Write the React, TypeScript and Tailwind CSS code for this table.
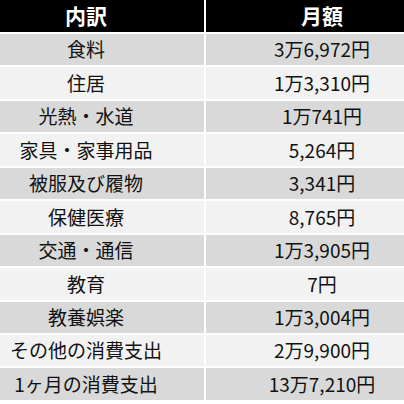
import React from 'react';

const rows: [string, string][] = [
  ['食料', '3万6,972円'],
  ['住居', '1万3,310円'],
  ['光熱・水道', '1万741円'],
  ['家具・家事用品', '5,264円'],
  ['被服及び履物', '3,341円'],
  ['保健医療', '8,765円'],
  ['交通・通信', '1万3,905円'],
  ['教育', '7円'],
  ['教養娯楽', '1万3,004円'],
  ['その他の消費支出', '2万9,900円'],
  ['1ヶ月の消費支出', '13万7,210円'],
];

export default function App() {
  return (
    <div
      className="w-[404px] h-[404px] overflow-hidden bg-white"
      style={{ fontFamily: '"Noto Sans CJK JP", "Noto Sans", sans-serif' }}
    >
      <div className="grid grid-cols-[204px_198px] gap-x-[2px] gap-y-[2px]">
        <div className="h-[32px] bg-black text-white font-bold text-[21px] flex items-center justify-center pr-[32px]">
          内訳
        </div>
        <div className="h-[32px] bg-black text-white font-bold text-[21px] flex items-center justify-center pl-[34px]">
          月額
        </div>
        {rows.map(([label, value], i) => {
          const bg = i % 2 === 0 ? 'bg-[#d9d9d9]' : 'bg-[#f2f2f2]';
          return (
            <React.Fragment key={label}>
              <div className={`h-[31.45px] ${bg} text-[#111] text-[19px] flex items-center justify-center pr-[32px]`}>
                {label}
              </div>
              <div className={`h-[31.45px] ${bg} text-[#111] text-[19px] flex items-center justify-center pl-[34px]`}>
                {value}
              </div>
            </React.Fragment>
          );
        })}
      </div>
    </div>
  );
}
